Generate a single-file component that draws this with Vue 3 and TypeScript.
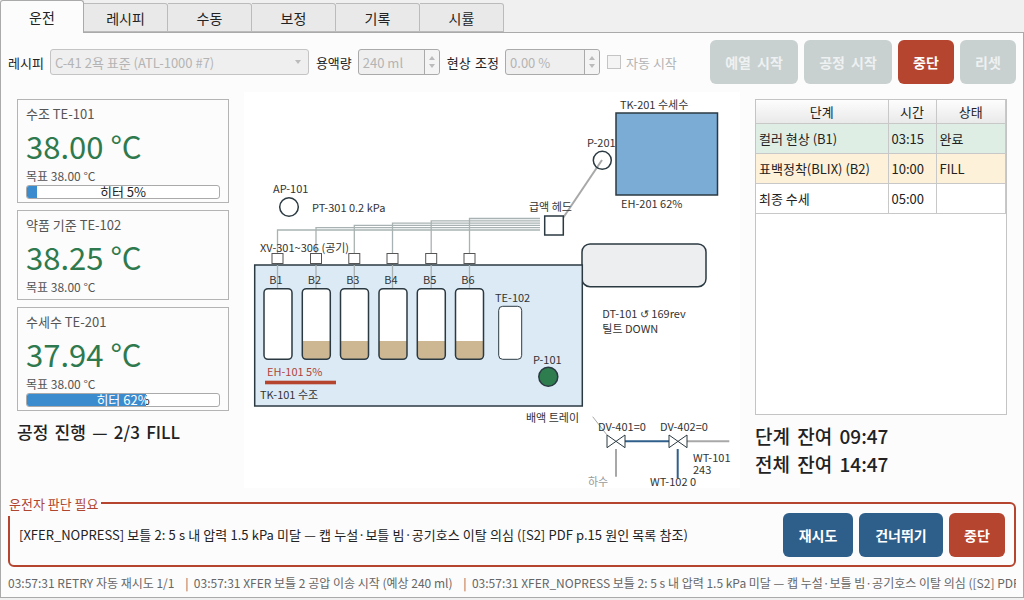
<script setup lang="ts">
const tabs = ['운전', '레시피', '수동', '보정', '기록', '시률']

const cards = [
  { name: '수조 TE-101', value: '38.00 °C', target: '목표 38.00 °C', heater: 5 },
  { name: '약품 기준 TE-102', value: '38.25 °C', target: '목표 38.00 °C', heater: null },
  { name: '수세수 TE-201', value: '37.94 °C', target: '목표 38.00 °C', heater: 62 },
]

const steps = [
  { name: '컬러 현상 (B1)', time: '03:15', state: '완료', cls: 'done' },
  { name: '표백정착(BLIX) (B2)', time: '10:00', state: 'FILL', cls: 'active' },
  { name: '최종 수세', time: '05:00', state: '', cls: '' },
]

// air lines: one per bottle, bus y gets higher toward B6
const bottles = [
  { label: 'B1', x: 264, cx: 277.5, busY: 230, filled: false },
  { label: 'B2', x: 302.3, cx: 316, busY: 227.7, filled: true },
  { label: 'B3', x: 340.5, cx: 354.3, busY: 225.4, filled: true },
  { label: 'B4', x: 379, cx: 392.5, busY: 223.1, filled: true },
  { label: 'B5', x: 417.3, cx: 431.2, busY: 220.8, filled: true },
  { label: 'B6', x: 455.5, cx: 469.5, busY: 218.5, filled: true },
]

const log =
  '03:57:31 RETRY 자동 재시도 1/1    |  03:57:31 XFER 보틀 2 공압 이송 시작 (예상 240 ml)    |  03:57:31 XFER_NOPRESS 보틀 2: 5 s 내 압력 1.5 kPa 미달 — 캡 누설·보틀 빔·공기호스 이탈 의심 ([S2] PDF p.15 원인 목록 참조)'
</script>

<template>
  <div class="app">
    <div class="tabs">
      <div v-for="(t, i) in tabs" :key="t" class="tab" :class="{ on: i === 0 }">{{ t }}</div>
    </div>

    <div class="pane">
      <div class="controls">
        <span class="lbl">레시피</span>
        <div class="field select">
          <span>C-41 2욕 표준 (ATL-1000 #7)</span>
          <i class="arrow"></i>
        </div>
        <span class="lbl">용액량</span>
        <div class="field spin w82">
          <span>240 ml</span>
          <div class="spinner"><i class="up"></i><i class="down"></i></div>
        </div>
        <span class="lbl wide">현상 조정</span>
        <div class="field spin w95">
          <span>0.00 %</span>
          <div class="spinner"><i class="up"></i><i class="down"></i></div>
        </div>
        <span class="check"><i></i>자동 시작</span>
        <div class="actions">
          <button class="btn off w88">예열 시작</button>
          <button class="btn off w88">공정 시작</button>
          <button class="btn red w56">중단</button>
          <button class="btn off w56">리셋</button>
        </div>
      </div>

      <div class="main">
        <div class="left">
          <div v-for="c in cards" :key="c.name" class="card">
            <div class="card-name">{{ c.name }}</div>
            <div class="card-value">{{ c.value }}</div>
            <div class="card-target">{{ c.target }}</div>
            <div v-if="c.heater !== null" class="bar">
              <span>히터 {{ c.heater }}%</span>
              <div class="chunk" :style="{ width: c.heater + '%' }">
                <span v-if="c.heater > 50" class="chunk-text">히터 {{ c.heater }}%</span>
              </div>
            </div>
          </div>
          <div class="progress">공정 진행 — 2/3 FILL</div>
        </div>

        <svg class="diagram" viewBox="244 92 496 396" width="496" height="396">
          <rect x="244" y="92" width="496" height="396" fill="#fff" />

          <!-- wash tank -->
          <text class="t" x="620" y="109">TK-201 수세수</text>
          <rect x="616" y="113" width="101.5" height="82" fill="#7bacd6" class="edge" />
          <text class="t" x="621" y="208">EH-201 62%</text>
          <line x1="602" y1="160" x2="563" y2="218" stroke="#a8a8a8" stroke-width="2" />
          <text class="t" x="587" y="147">P-201</text>
          <circle cx="602.3" cy="160.3" r="9" fill="none" class="edge" />

          <!-- supply head and air bus -->
          <text class="t" x="529" y="211">급액 헤드</text>
          <rect x="544.7" y="216" width="18.6" height="19" fill="#fff" class="edge" />
          <g v-for="b in bottles" :key="'air' + b.label">
            <polyline
              :points="`${b.cx},288 ${b.cx},${b.busY} 540,${b.busY}`"
              fill="none"
              stroke="#a9b2b2"
              stroke-width="1.3"
            />
          </g>

          <text class="t" x="273" y="193">AP-101</text>
          <circle cx="289" cy="207" r="9.3" fill="#fff" class="edge" />
          <text class="t" x="312" y="212">PT-301 0.2 kPa</text>
          <text class="t" x="260" y="252">XV-301~306 (공기)</text>

          <!-- drum -->
          <rect x="582" y="244" width="124" height="42.7" rx="8" fill="#eceeef" class="edge" />

          <!-- TK-101 bath -->
          <rect x="254.7" y="265" width="327.6" height="141" fill="#dceaf6" class="edge" />
          <g v-for="b in bottles" :key="b.label">
            <line :x1="b.cx" y1="265" :x2="b.cx" y2="288" stroke="#a9b2b2" stroke-width="1.3" />
            <rect
              :x="b.cx - 5.5"
              y="253.5"
              width="11"
              height="10"
              fill="#fff"
              stroke="#555"
              stroke-width="1"
            />
            <text class="t center" :x="b.cx - 1.5" y="284">{{ b.label }}</text>
            <rect :x="b.x" y="288.7" width="28" height="70.6" rx="4" fill="#fff" />
            <path
              v-if="b.filled"
              :d="`M${b.x} 341h28v14.3a4 4 0 0 1 -4 4h-20a4 4 0 0 1 -4 -4z`"
              fill="#cdb793"
            />
            <rect :x="b.x" y="288.7" width="28" height="70.6" rx="4" fill="none" class="edge" />
          </g>
          <text class="t" x="495" y="302">TE-102</text>
          <rect x="498.7" y="306.3" width="23" height="53" rx="4" fill="#fff" stroke="#2b3a42" stroke-width="1" />
          <text class="t" x="533" y="364">P-101</text>
          <circle cx="548.3" cy="376.7" r="9.5" fill="#2e7d4f" class="edge" />
          <text class="t heat" x="267" y="376">EH-101 5%</text>
          <rect x="265" y="380.7" width="71" height="3.6" fill="#b5452f" />
          <text class="t" x="260" y="399">TK-101 수조</text>

          <text class="t" x="602.3" y="318">DT-101 ↺ 169rev</text>
          <text class="t" x="602.3" y="332.7">틸트 DOWN</text>
          <text class="t" x="526" y="422">배액 트레이</text>

          <!-- drain valves -->
          <line x1="592.7" y1="416.7" x2="607" y2="435" stroke="#a8a8a8" stroke-width="1" />
          <line x1="625" y1="441.3" x2="669" y2="441.3" stroke="#2f5f8a" stroke-width="2" />
          <line x1="687" y1="441.3" x2="729.3" y2="441.3" stroke="#a8a8a8" stroke-width="2" />
          <line x1="616" y1="449" x2="616" y2="476.7" stroke="#a8a8a8" stroke-width="2" />
          <line x1="677.7" y1="449" x2="677.7" y2="478" stroke="#2f5f8a" stroke-width="2" />
          <path d="M607 435v12.7l18 -12.7v12.7z" fill="#fff" stroke="#2b3a42" stroke-width="1" />
          <path d="M669 435v12.7l18 -12.7v12.7z" fill="#fff" stroke="#2b3a42" stroke-width="1" />
          <text class="t" x="598" y="431">DV-401=0</text>
          <text class="t" x="660" y="431">DV-402=0</text>
          <text class="t muted" x="588" y="486">하수</text>
          <text class="t" x="650" y="486">WT-102 0</text>
          <text class="t" x="693" y="462">WT-101</text>
          <text class="t" x="693" y="474">243</text>
        </svg>

        <div class="right">
          <div class="table-box">
            <table>
              <colgroup>
                <col class="c1" />
                <col class="c2" />
                <col class="c3" />
              </colgroup>
              <thead>
                <tr>
                  <th>단계</th>
                  <th>시간</th>
                  <th>상태</th>
                </tr>
              </thead>
              <tbody>
                <tr v-for="s in steps" :key="s.name" :class="s.cls">
                  <td>{{ s.name }}</td>
                  <td>{{ s.time }}</td>
                  <td>{{ s.state }}</td>
                </tr>
              </tbody>
            </table>
          </div>
          <div class="remain">단계 잔여 09:47</div>
          <div class="remain">전체 잔여 14:47</div>
        </div>
      </div>

      <div class="alert">
        <div class="legend">운전자 판단 필요</div>
        <div class="message">[XFER_NOPRESS] 보틀 2: 5 s 내 압력 1.5 kPa 미달 — 캡 누설·보틀 빔·공기호스 이탈 의심 ([S2] PDF p.15 원인 목록 참조)</div>
        <button class="btn blue w70">재시도</button>
        <button class="btn blue w84">건너뛰기</button>
        <button class="btn red w56">중단</button>
      </div>

      <div class="log">{{ log }}</div>
    </div>
  </div>
</template>

<style scoped>
.app {
  width: 1024px;
  height: 600px;
  display: flex;
  flex-direction: column;
  background: #f0f0f0;
  font-family: "Noto Sans CJK KR", "Noto Sans", sans-serif;
  color: #222;
  overflow: hidden;
}
.tabs {
  height: 32px;
  display: flex;
  align-items: flex-end;
  flex: none;
  position: relative;
  z-index: 1;
}
.tab {
  width: 84px;
  height: 29px;
  box-sizing: border-box;
  border: 1px solid #bbb;
  border-left: 0;
  border-radius: 0 3px 0 0;
  background: #e9e9e9;
  font-size: 14px;
  line-height: 29px;
  text-align: center;
}
.tab.on {
  height: 33px;
  margin-bottom: -1px;
  border-bottom: 0;
  border-color: #aaa;
  border-left: 1px solid #aaa;
  border-radius: 3px 3px 0 0;
  background: #fcfcfc;
  line-height: 32px;
}
.pane {
  flex: none;
  height: 566px;
  box-sizing: border-box;
  border: 1px solid #aaa;
  background: #fcfcfc;
  padding: 7px 7px 0;
}
.controls {
  height: 44px;
  display: flex;
  align-items: center;
  gap: 6px;
  font-size: 13px;
}
.lbl {
  white-space: nowrap;
}
.lbl.wide {
  word-spacing: 1.5px;
}
.field {
  height: 26px;
  box-sizing: border-box;
  border: 1px solid #c4c4c4;
  border-radius: 3px;
  background: #efefef;
  color: #b4b4b4;
  font-size: 13px;
  display: flex;
  align-items: center;
  padding-left: 4px;
  position: relative;
  margin-right: 1px;
  flex: none;
}
.select {
  width: 259px;
}
.arrow {
  position: absolute;
  right: 7px;
  top: 10px;
  border: 3.5px solid transparent;
  border-top: 4px solid #bbb;
}
.w82 {
  width: 82px;
}
.w95 {
  width: 95px;
}
.spin {
  border-color: #aaa;
}
.spinner {
  position: absolute;
  right: 0;
  top: 0;
  bottom: 0;
  width: 14px;
  border-left: 1px solid #aaa;
  background: #f4f4f4;
  border-radius: 0 3px 3px 0;
  display: flex;
  flex-direction: column;
  align-items: center;
  justify-content: center;
  gap: 4px;
}
.up {
  border: 3px solid transparent;
  border-top: 0;
  border-bottom: 4px solid #bbb;
}
.down {
  border: 3px solid transparent;
  border-bottom: 0;
  border-top: 4px solid #bbb;
}
.check {
  display: flex;
  align-items: center;
  gap: 5px;
  color: #b4b4b4;
  white-space: nowrap;
}
.check i {
  width: 14px;
  height: 14px;
  box-sizing: border-box;
  border: 1px solid #c4c4c4;
  background: #f4f4f4;
}
.actions {
  margin-left: auto;
  display: flex;
  gap: 6px;
}
.btn {
  height: 44px;
  box-sizing: border-box;
  border: 0;
  border-radius: 6px;
  padding: 0;
  color: #fff;
  font-family: inherit;
  font-size: 14px;
  font-weight: 700;
  word-spacing: 3px;
  flex: none;
}
.btn.off {
  background: #c8d0d0;
  color: #eef1f1;
}
.btn.red {
  background: #b5452f;
}
.btn.blue {
  background: #2e5f8a;
}
.w88 {
  width: 88px;
}
.w56 {
  width: 56px;
}
.w70 {
  width: 70px;
}
.w84 {
  width: 84px;
}
.main {
  margin-top: 8px;
  height: 396px;
  display: flex;
  gap: 15px;
  padding-left: 9px;
}
.left {
  width: 212px;
  flex: none;
  padding-top: 7px;
  display: flex;
  flex-direction: column;
  gap: 7px;
}
.card {
  box-sizing: border-box;
  border: 1px solid #b4b4b4;
  padding: 5px 8px 3px;
}
.card-name {
  font-size: 13px;
  line-height: 18px;
  color: #555;
}
.card-value {
  font-size: 31px;
  line-height: 42px;
  font-weight: 400;
  color: #2e7a4e;
  margin-top: 2px;
}
.card-target {
  font-size: 12px;
  line-height: 18px;
  color: #555;
}
.bar {
  height: 14px;
  box-sizing: border-box;
  border: 1px solid #aaa;
  border-radius: 3px;
  background: #fff;
  text-align: center;
  font-size: 13px;
  line-height: 12px;
  position: relative;
  overflow: hidden;
  color: #222;
}
.chunk {
  position: absolute;
  left: 0;
  top: 0;
  bottom: 0;
  background: #3a8ccf;
  overflow: hidden;
}
.chunk-text {
  position: absolute;
  left: 0;
  top: 0;
  width: 192px;
  text-align: center;
  color: #fff;
}
.progress {
  font-size: 17px;
  font-weight: 500;
  line-height: 24px;
  word-spacing: 2.5px;
  margin-top: 2px;
}
.diagram {
  flex: none;
  display: block;
}
.t {
  font-size: 11px;
  fill: #333;
}
.t.center {
  text-anchor: middle;
}
.t.heat {
  fill: #b0453a;
}
.t.muted {
  fill: #999;
}
.edge {
  stroke: #2b3a42;
  stroke-width: 1.5;
}
.right {
  width: 252px;
  flex: none;
  padding-top: 7px;
}
.table-box {
  height: 316px;
  box-sizing: border-box;
  border: 1px solid #c4c4c4;
  background: #fff;
  margin-bottom: 7px;
}
table {
  width: 100%;
  table-layout: fixed;
  border-collapse: collapse;
  font-size: 13px;
}
.c1 {
  width: 132px;
}
.c2 {
  width: 48px;
}
th {
  height: 23px;
  padding: 0;
  font-weight: 400;
  border-right: 1px solid #c8c8c8;
  border-bottom: 1px solid #c8c8c8;
  background: linear-gradient(#fdfdfd, #e9e9e9);
}
td {
  height: 29px;
  padding: 0 3px;
  border-right: 1px solid #c8c8c8;
  border-bottom: 1px solid #c8c8c8;
  white-space: nowrap;
}
tr.done td {
  background: #dfeee5;
}
tr.active td {
  background: #fdf1d9;
}
.remain {
  font-size: 19px;
  font-weight: 500;
  line-height: 28px;
  word-spacing: 3px;
}
.alert {
  margin: 14px 0 0 0;
  height: 65px;
  box-sizing: border-box;
  border: 2px solid #b5452f;
  border-radius: 6px;
  display: flex;
  align-items: center;
  gap: 6px;
  padding: 0 9px;
  position: relative;
  font-size: 13px;
}
.legend {
  position: absolute;
  left: -2px;
  top: -8px;
  height: 20px;
  padding: 0 2px 0 1px;
  background: #fcfcfc;
  color: #b0452f;
  line-height: 16px;
}
.message {
  flex: 1;
  white-space: nowrap;
  overflow: hidden;
  word-spacing: 0.3px;
}
.log {
  height: 31px;
  line-height: 31px;
  font-size: 12px;
  color: #666;
  white-space: pre;
  overflow: hidden;
}
</style>

<style>
body {
  background: #f0f0f0;
}
</style>
